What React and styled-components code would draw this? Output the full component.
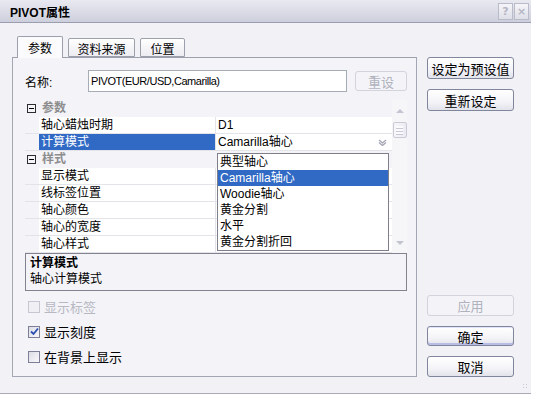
import styled, { createGlobalStyle } from 'styled-components';

const GlobalStyle = createGlobalStyle`
  html, body { margin: 0; padding: 0; background: #ffffff; }
  body {
    font-family: Tahoma, "Liberation Sans", "Noto Sans CJK SC", sans-serif;
    font-size: 12px;
    color: #000;
  }
`;

const Dialog = styled.div`
  width: 531px;
  height: 393px;
  background: #f1f1f6;
  border-bottom: 1px solid #a9a9b8;
  display: flex;
  flex-direction: column;
`;

const TitleBar = styled.div`
  height: 23px;
  flex: 0 0 23px;
  box-sizing: border-box;
  background: linear-gradient(#e9e9f1, #cdcfdc);
  border-bottom: 1px solid #9b9db1;
  display: flex;
  align-items: center;
  padding: 0 2px 0 10px;
`;

const Title = styled.div`
  flex: 1;
  font-weight: bold;
  font-size: 12px;
  color: #000;
`;

const CapBtn = styled.div`
  width: 13px;
  height: 15px;
  margin-left: 1px;
  border: 1px solid #b9bbc9;
  background: linear-gradient(#f5f5f9, #dedfe8);
  color: #b4b6c4;
  font-weight: bold;
  font-size: 11px;
  line-height: 15px;
  text-align: center;
  font-family: "DejaVu Sans", sans-serif;
`;

const Body = styled.div`
  flex: 1;
  display: flex;
  padding: 13px 0 16px 12px;
  gap: 10px;
`;

const LeftCol = styled.div`
  width: 405px;
  display: flex;
  flex-direction: column;
`;

const TabRow = styled.div`
  display: flex;
  align-items: flex-end;
  height: 21px;
  padding-left: 5px;
  gap: 5px;
  position: relative;
  z-index: 1;
`;

const Tab = styled.div`
  box-sizing: border-box;
  width: ${({ w }) => w}px;
  height: ${({ active }) => (active ? 22 : 19)}px;
  margin-bottom: ${({ active }) => (active ? -1 : 0)}px;
  border: 1px solid #9ba0ac;
  border-bottom: ${({ active }) => (active ? 'none' : '1px solid #9ba0ac')};
  border-radius: 2px 2px 0 0;
  background: ${({ active }) => (active ? '#fbfbfd' : 'linear-gradient(#ffffff, #ececf2)')};
  display: flex;
  align-items: center;
  justify-content: center;
  font-size: 12px;
  padding-top: ${({ active }) => (active ? 0 : 1)}px;
`;

const Panel = styled.div`
  flex: 1;
  box-sizing: border-box;
  border: 1px solid #a3a7b3;
  border-top-color: #9ba0ac;
  background: #f3f3f8;
  padding: 12px 0 0 12px;
  display: flex;
  flex-direction: column;
`;

const NameRow = styled.div`
  display: flex;
  align-items: center;
  height: 22px;
`;

const NameLabel = styled.div`
  width: 63px;
  font-size: 12px;
`;

const TextInput = styled.div`
  box-sizing: border-box;
  width: 259px;
  height: 22px;
  border: 1px solid #a5acb5;
  background: #fff;
  padding: 0 2px;
  display: flex;
  align-items: center;
  font-size: 11px;
  letter-spacing: -0.45px;
`;

const Button = styled.div`
  box-sizing: border-box;
  width: ${({ w }) => w || 87}px;
  height: ${({ h }) => h || 22}px;
  margin-left: ${({ ml }) => ml || 0}px;
  border: 1px solid ${({ disabled }) => (disabled ? '#d2d3dc' : '#80869c')};
  border-radius: 3px;
  background: ${({ disabled }) =>
    disabled ? '#f4f4f8' : 'linear-gradient(#ffffff 0%, #f4f4f8 60%, #e2e3eb 100%)'};
  box-shadow: ${({ primary }) => (primary ? 'inset 0 -2px 0 #b9bde6, inset 0 1px 0 #e2e4fa' : 'none')};
  color: ${({ disabled }) => (disabled ? '#b0b2bd' : '#000')};
  display: flex;
  align-items: center;
  justify-content: center;
  font-size: 13px;
`;

const Grid = styled.div`
  position: relative;
  width: 382px;
  height: 153px;
  margin-top: 8px;
  display: flex;
`;

const Rows = styled.div`
  flex: 1;
  display: flex;
  flex-direction: column;
`;

const Row = styled.div`
  display: flex;
  height: 17px;
  box-sizing: border-box;
  border-bottom: 1px solid ${({ cat }) => (cat ? 'transparent' : '#e3e3ea')};
`;

const Gutter = styled.div`
  width: 14px;
  display: flex;
  align-items: center;
`;

const MinusBox = styled.div`
  box-sizing: border-box;
  width: 9px;
  height: 9px;
  margin-left: 2px;
  border: 1px solid #2d2d2d;
  position: relative;
  &::after {
    content: '';
    position: absolute;
    left: 1px;
    right: 1px;
    top: 3px;
    height: 1px;
    background: #000;
  }
`;

const CatLabel = styled.div`
  font-weight: bold;
  color: #8d8d8d;
  font-size: 12px;
  line-height: 16px;
  padding-left: 3px;
`;

const Label = styled.div`
  width: 177px;
  padding-left: 2px;
  box-sizing: border-box;
  line-height: 16px;
  background: ${({ sel }) => (sel ? '#316ac5' : '#fff')};
  color: ${({ sel }) => (sel ? '#fff' : '#000')};
  border-right: 1px solid #e3e3ea;
`;

const Value = styled.div`
  flex: 1;
  background: #fff;
  padding-left: 2px;
  line-height: 16px;
  display: flex;
  align-items: center;
  justify-content: space-between;
`;

const Chevron = styled.svg`
  margin-right: 5px;
`;

const ScrollBar = styled.div`
  width: 15px;
  background: #f6f6f9;
  display: flex;
  flex-direction: column;
  align-items: center;
`;

const ScrollArrow = styled.div`
  width: 0;
  height: 0;
  border-left: 4px solid transparent;
  border-right: 4px solid transparent;
  ${({ down }) => (down ? 'border-top: 4px solid #c2c4d0;' : 'border-bottom: 4px solid #c2c4d0;')}
  margin-top: ${({ down }) => (down ? 'auto' : '9px')};
  margin-bottom: ${({ down }) => (down ? '8px' : '0')};
`;

const Thumb = styled.div`
  box-sizing: border-box;
  width: 14px;
  height: 16px;
  margin-top: 9px;
  border: 1px solid #c9cad6;
  border-radius: 2px;
  background: repeating-linear-gradient(#fbfbfd 0 2px, #c8c9d6 2px 3px) center / 7px 9px no-repeat,
    linear-gradient(90deg, #f7f7fa, #ebebf2);
`;

const DropList = styled.div`
  position: absolute;
  left: 192px;
  top: 53px;
  width: 172px;
  box-sizing: border-box;
  border: 1px solid #7f7f8c;
  background: #fff;
`;

const DropItem = styled.div`
  height: 16px;
  line-height: 16px;
  padding-left: 2px;
  background: ${({ sel }) => (sel ? '#316ac5' : '#fff')};
  color: ${({ sel }) => (sel ? '#fff' : '#000')};
`;

const Desc = styled.div`
  box-sizing: border-box;
  width: 382px;
  height: 38px;
  border: 1px solid #838390;
  background: #f3f3f8;
  padding: 1px 4px;
  line-height: 16px;
`;

const DescTitle = styled.div`
  font-weight: bold;
`;

const Checks = styled.div`
  display: flex;
  flex-direction: column;
  gap: 12px;
  margin-top: 9px;
  padding-left: 3px;
`;

const CheckRow = styled.div`
  display: flex;
  align-items: center;
  height: 13px;
  gap: 4px;
  color: ${({ disabled }) => (disabled ? '#b7b8c2' : '#000')};
  font-size: 13px;
`;

const Box = styled.div`
  box-sizing: border-box;
  width: 12px;
  height: 12px;
  border: 1px solid ${({ disabled }) => (disabled ? '#c6c7d2' : '#7c7f96')};
  background: ${({ disabled }) => (disabled ? '#f0f0f4' : 'linear-gradient(135deg, #dcdce6, #f8f8fb)')};
  display: flex;
  align-items: center;
  justify-content: center;
`;

const RightCol = styled.div`
  width: 87px;
  display: flex;
  flex-direction: column;
  padding-top: 21px;
  gap: 10px;
`;

const Spacer = styled.div`
  flex: 1;
`;

const Grip = styled.div`
  position: absolute;
  left: 522px;
  top: 383px;
  width: 7px;
  height: 7px;
  background: radial-gradient(circle, #c8c9d4 0.8px, transparent 1px) 0 0 / 3px 3px;
`;

const params = [
  { label: '轴心蜡烛时期', value: 'D1' },
  { label: '计算模式', value: 'Camarilla轴心', sel: true },
];
const styles = ['显示模式', '线标签位置', '轴心颜色', '轴心的宽度', '轴心样式'];
const options = ['典型轴心', 'Camarilla轴心', 'Woodie轴心', '黄金分割', '水平', '黄金分割折回'];

export default function App() {
  return (
    <>
      <GlobalStyle />
      <div style={{ position: 'relative' }}>
        <Dialog>
          <TitleBar>
            <Title>PIVOT属性</Title>
            <CapBtn>?</CapBtn>
            <CapBtn>×</CapBtn>
          </TitleBar>
          <Body>
            <LeftCol>
              <TabRow>
                <Tab active w={46}>参数</Tab>
                <Tab w={67}>资料来源</Tab>
                <Tab w={45}>位置</Tab>
              </TabRow>
              <Panel>
                <NameRow>
                  <NameLabel>名称:</NameLabel>
                  <TextInput>PIVOT(EUR/USD,Camarilla)</TextInput>
                  <Button disabled w={52} h={20} ml={8}>重设</Button>
                </NameRow>
                <Grid>
                  <Rows>
                    <Row cat>
                      <Gutter><MinusBox /></Gutter>
                      <CatLabel>参数</CatLabel>
                    </Row>
                    {params.map((p) => (
                      <Row key={p.label}>
                        <Gutter />
                        <Label sel={p.sel}>{p.label}</Label>
                        <Value>
                          {p.value}
                          {p.sel && (
                            <Chevron width="9" height="7" viewBox="0 0 9 7">
                              <path d="M1 1 L4.5 4 L8 1 M1 3.5 L4.5 6.5 L8 3.5" fill="none" stroke="#a3a5b4" strokeWidth="1.3" />
                            </Chevron>
                          )}
                        </Value>
                      </Row>
                    ))}
                    <Row cat>
                      <Gutter><MinusBox /></Gutter>
                      <CatLabel>样式</CatLabel>
                    </Row>
                    {styles.map((s) => (
                      <Row key={s}>
                        <Gutter />
                        <Label>{s}</Label>
                        <Value />
                      </Row>
                    ))}
                  </Rows>
                  <ScrollBar>
                    <ScrollArrow />
                    <Thumb />
                    <ScrollArrow down />
                  </ScrollBar>
                  <DropList>
                    {options.map((o) => (
                      <DropItem key={o} sel={o === 'Camarilla轴心'}>{o}</DropItem>
                    ))}
                  </DropList>
                </Grid>
                <Desc>
                  <DescTitle>计算模式</DescTitle>
                  <div>轴心计算模式</div>
                </Desc>
                <Checks>
                  <CheckRow disabled>
                    <Box disabled />
                    显示标签
                  </CheckRow>
                  <CheckRow>
                    <Box>
                      <svg width="9" height="9" viewBox="0 0 9 9">
                        <path d="M1 4.5 L3.5 7 L8 1.5" fill="none" stroke="#2b4fb0" strokeWidth="1.8" />
                      </svg>
                    </Box>
                    显示刻度
                  </CheckRow>
                  <CheckRow>
                    <Box />
                    在背景上显示
                  </CheckRow>
                </Checks>
              </Panel>
            </LeftCol>
            <RightCol>
              <Button>设定为预设值</Button>
              <Button>重新设定</Button>
              <Spacer />
              <Button disabled h={21}>应用</Button>
              <Button primary h={20}>确定</Button>
              <Button h={21}>取消</Button>
            </RightCol>
          </Body>
        </Dialog>
        <Grip />
      </div>
    </>
  );
}
